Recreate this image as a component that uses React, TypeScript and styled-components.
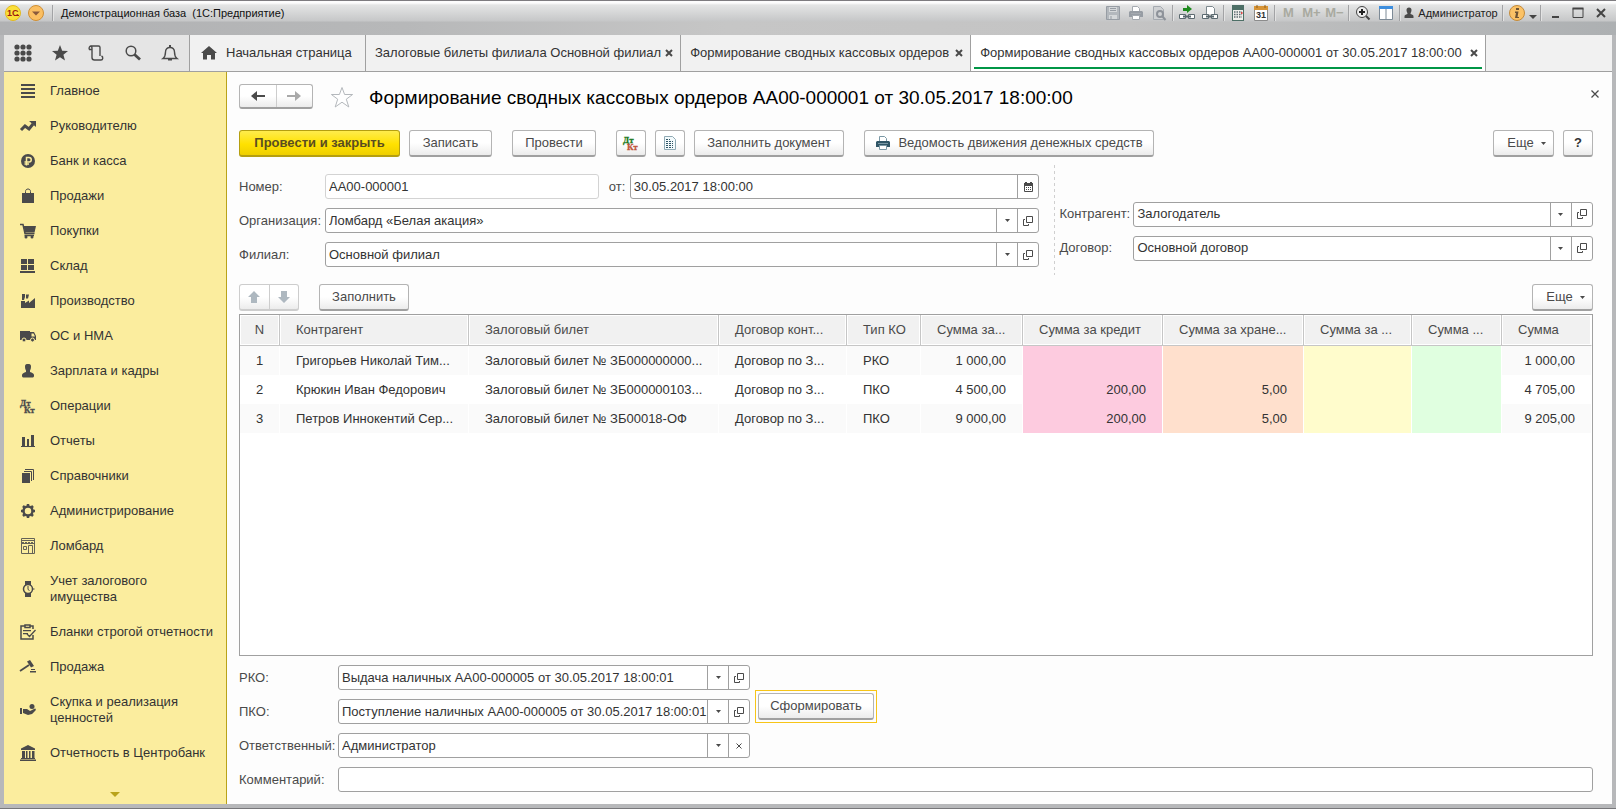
import React from "react";
import styled, { createGlobalStyle, css } from "styled-components";

const GlobalStyle = createGlobalStyle`
  * { box-sizing: border-box; }
  body {
    margin: 0;
    font-family: "Liberation Sans", Arial, sans-serif;
    font-size: 13px;
    line-height: 16px;
    color: #333;
  }
  button, input { font: inherit; color: inherit; }
  svg { overflow: visible; }
`;

/* ---------- window frame ---------- */

const Frame = styled.div`
  display: flex;
  flex-direction: column;
  height: 100vh;
  min-height: 560px;
  padding: 0 4px 4px;
  background: #b7b8ba;
  border-top: 1px solid #7e7c80;
  border-bottom: 1px solid #77777a;
`;

const TitleBar = styled.header`
  display: flex;
  align-items: flex-start;
  height: 34px;
  margin: 0 -4px;
  padding: 0 4px;
  background:
    linear-gradient(#fdfdfd 0, #fdfdfd 2px, #e4e5e5 4px, #c6c7c8 20px, transparent 21px),
    linear-gradient(90deg, #b0b1b3, #b7b8b9 25%, #c6c6c6 45%, #c4c4c4 70%, #adb0b2);
`;

const TitleGroup = styled.div<{ $push?: boolean }>`
  display: flex;
  align-items: center;
  height: 24px;
  margin-left: ${(p) => (p.$push ? "auto" : "0")};
`;

const TitleText = styled.span`
  padding-left: 6px;
  font-size: 11px;
  color: #111;
  white-space: pre;
`;

const Separator = styled.span`
  width: 1px;
  height: 16px;
  margin: 0 2px;
  background: #a2a3a5;
  box-shadow: 1px 0 0 #e3e3e3;
`;

const TitleButton = styled.button<{ $w?: number; $dim?: boolean }>`
  display: flex;
  align-items: center;
  justify-content: center;
  width: ${(p) => (p.$w ? p.$w + "px" : "23px")};
  height: 24px;
  padding: 0;
  border: 0;
  background: none;
  font-size: 13px;
  font-weight: bold;
  color: ${(p) => (p.$dim ? "#a9aaa0" : "#3c3c3c")};
`;

const UserButton = styled(TitleButton)`
  width: 98px;
  gap: 4px;
  font-size: 11px;
  font-weight: normal;
  color: #222;
`;

/* ---------- tab strip ---------- */

const TabStrip = styled.div`
  display: flex;
  flex: none;
  height: 37px;
  background: #f1f1f1;
  border-bottom: 1px solid #a0a0a0;
`;

const Tools = styled.div`
  display: flex;
  flex: none;
  align-items: center;
  width: 185px;
  padding: 0 1px;
  background: #e5e5e5;
`;

const ToolButton = styled.button`
  display: flex;
  flex: 1;
  align-items: center;
  justify-content: center;
  height: 36px;
  padding: 0;
  border: 0;
  background: none;
`;

const Tab = styled.div<{ $active?: boolean; $min?: number }>`
  display: flex;
  align-items: center;
  justify-content: space-between;
  gap: 2px;
  min-width: ${(p) => p.$min ?? 0}px;
  padding: 0 5px 0 9px;
  border-left: 1px solid #a0a0a0;
  white-space: nowrap;
  ${(p) =>
    p.$active &&
    css`
      background: #fff;
      border-right: 1px solid #a0a0a0;
      box-shadow: inset 3px 0 #fff, inset -3px 0 #fff, inset 0 -2px #fff, inset 0 -4px #009646;
    `}
`;

const HomeTab = styled(Tab)`
  justify-content: flex-start;
  gap: 9px;
  padding: 0 0 0 11px;
`;

const TabLink = styled.a`
  color: #333;
  text-decoration: none;
`;

const IconButton = styled.button`
  display: flex;
  align-items: center;
  justify-content: center;
  width: 12px;
  height: 12px;
  padding: 0;
  border: 0;
  background: none;
`;

/* ---------- body ---------- */

const Body = styled.div`
  display: flex;
  flex: 1;
  min-height: 0;
  background: #fdfdfd;
`;

const Sidebar = styled.nav`
  display: flex;
  flex: none;
  flex-direction: column;
  width: 223px;
  background: #fbed9e;
  border-right: 1px solid #b9a31a;
`;

const NavList = styled.div`
  flex: 1;
  min-height: 0;
  padding-top: 1px;
  overflow: hidden;
`;

const NavLink = styled.a`
  display: flex;
  align-items: center;
  gap: 14px;
  min-height: 35px;
  padding: 10px 10px 9px 16px;
  color: #333;
  text-decoration: none;
`;

const NavIcon = styled.span`
  display: flex;
  flex: none;
  width: 16px;
  height: 16px;
`;

const NavText = styled.span`
  max-width: 166px;
`;

const MoreNav = styled.button`
  display: flex;
  justify-content: center;
  height: 12px;
  padding: 0;
  border: 0;
  background: none;
`;

const Main = styled.main`
  display: flex;
  flex: 1;
  flex-direction: column;
  min-width: 0;
  padding: 12px 19px 12px 12px;
`;

const HeadRow = styled.div`
  display: flex;
  align-items: center;
  height: 25px;
`;

const Title = styled.h1`
  flex: 1;
  margin: 0 0 0 15px;
  padding-top: 2px;
  font-size: 19px;
  line-height: 25px;
  font-weight: normal;
  color: #000;
  white-space: nowrap;
`;

const Star = styled.button`
  display: flex;
  margin-left: 17px;
  padding: 0;
  border: 0;
  background: none;
`;

const CloseForm = styled(IconButton)`
  align-self: flex-start;
  margin: 4px -8px 0 0;
`;

const raised = css`
  border: 1px solid #b4b4b4;
  border-bottom: 2px solid #a0a0a0;
  border-radius: 3px;
  background: linear-gradient(#fff 50%, #ececec);
`;

const ButtonPair = styled.div<{ $w: number; $h: number; $pale?: boolean }>`
  display: flex;
  width: ${(p) => p.$w}px;
  height: ${(p) => p.$h}px;
  ${raised}
  ${(p) => p.$pale && css`border-color: #cdcdcd;`}
`;

const PairButton = styled.button`
  display: flex;
  flex: 1;
  align-items: center;
  justify-content: center;
  padding: 0;
  border: 0;
  background: none;
  & + & { border-left: 1px solid #cdcdcd; }
`;

const CommandBar = styled.div`
  display: flex;
  align-items: center;
  margin-top: 21px;
`;

const Button = styled.button<{ $w: number; $gap?: number; $push?: boolean }>`
  display: flex;
  flex: none;
  align-items: center;
  justify-content: center;
  gap: 7px;
  width: ${(p) => p.$w}px;
  height: 27px;
  margin-left: ${(p) => (p.$push ? "auto" : (p.$gap ?? 0) + "px")};
  padding: 0;
  color: #4a4a4a;
  white-space: nowrap;
  ${raised}
`;

const PrimaryButton = styled(Button)`
  font-weight: bold;
  color: #5a4d20;
  border-color: #b59f10;
  background: linear-gradient(#ffec4d, #ffe100 55%, #efcf00);
`;

const MoreButton = styled(Button)`
  padding-left: 6px;
`;

const HelpButton = styled(Button)`
  font-weight: bold;
  color: #333;
`;

const Fields = styled.div`
  display: grid;
  grid-template-columns: minmax(0, 3fr) 20px minmax(0, 2fr);
  margin-top: 8px;
`;

const FieldColumn = styled.div`
  display: flex;
  flex-direction: column;
  gap: 9px;
  padding: 9px 0 8px;
`;

const RightColumn = styled(FieldColumn)`
  justify-content: center;
  padding: 22px 0 0;
`;

const DashedLine = styled.div`
  width: 1px;
  margin-left: 15px;
  background: repeating-linear-gradient(#cfcfcf 0 3px, transparent 3px 6px);
`;

const FieldRow = styled.div`
  display: flex;
  align-items: center;
`;

const Label = styled.label<{ $w: number }>`
  flex: none;
  width: ${(p) => p.$w}px;
  color: #4a4a4a;
  white-space: nowrap;
`;

const OfLabel = styled(Label)`
  padding-left: 10px;
`;

const Box = styled.div<{ $grow?: number; $pale?: boolean }>`
  display: flex;
  flex: ${(p) => p.$grow ?? 1} 1 0;
  min-width: 0;
  height: 25px;
  border: 1px solid ${(p) => (p.$pale ? "#d3d3d3" : "#a0a0a0")};
  border-radius: 3px;
  background: #fff;
`;

const TextInput = styled.input`
  flex: 1;
  min-width: 0;
  padding: 0 0 0 3px;
  border: 0;
  outline: 0;
  background: none;
`;

const BoxButton = styled.button`
  display: flex;
  flex: none;
  align-items: center;
  justify-content: center;
  width: 21px;
  padding: 0;
  border: 0;
  border-left: 1px solid #a0a0a0;
  background: none;
`;

/* ---------- table ---------- */

const TableBar = styled.div`
  display: flex;
  align-items: center;
  margin-top: 9px;
`;

const TableFrame = styled.div`
  flex: 1;
  min-height: 0;
  margin-top: 3px;
  border: 1px solid #a0a0a0;
  background: #fff;
  overflow: hidden;
`;

const Table = styled.table`
  width: 100%;
  table-layout: fixed;
  border-collapse: separate;
  border-spacing: 0;
`;

const Th = styled.th<{ $center?: boolean }>`
  height: 31px;
  padding: 0 0 0 16px;
  ${(p) => p.$center && "padding: 0;"}
  border-right: 1px solid #c6c6c6;
  border-bottom: 1px solid #c6c6c6;
  background: #f1f1f1;
  box-shadow: inset 0 0 0 1px #fff;
  font-weight: normal;
  text-align: ${(p) => (p.$center ? "center" : "left")};
  color: #4a4a4a;
  white-space: nowrap;
  overflow: hidden;
  &:last-child { border-right-color: #fff; }
`;

type Align = "left" | "right" | "center";

const Td = styled.td<{ $align: Align; $tint?: string }>`
  height: 29px;
  padding: ${(p) => (p.$align === "center" ? "0" : p.$align === "left" ? "0 0 0 16px" : "0 16px 0 0")};
  border-right: 1px solid #fff;
  text-align: ${(p) => p.$align};
  white-space: nowrap;
  overflow: hidden;
  background: ${(p) => p.$tint ?? "transparent"};
`;

const Tr = styled.tr`
  &:nth-child(odd) { background: #fafafa; }
`;

/* ---------- bottom fields ---------- */

const Bottom = styled.div`
  display: flex;
  flex-direction: column;
  gap: 9px;
  margin-top: 9px;
`;

const BottomTop = styled.div`
  display: flex;
  gap: 5px;
`;

const BottomFields = styled.div`
  display: flex;
  flex-direction: column;
  gap: 9px;
  width: 511px;
`;

const FocusRing = styled.div`
  align-self: flex-start;
  margin-top: 25px;
  padding: 2px;
  border: 1px solid #f7c518;
`;

/* ---------- icons ---------- */

const DARK = "#4a4a4a";

function Svg({ s = 16, children, w, h }: { s?: number; w?: number; h?: number; children: React.ReactNode }) {
  const W = w ?? s;
  const H = h ?? s;
  return (
    <svg width={W} height={H} viewBox={`0 0 ${W} ${H}`} fill="none" aria-hidden="true">
      {children}
    </svg>
  );
}

const Cross = ({ bold }: { bold?: boolean }) => (
  <Svg s={bold ? 8 : 10}>
    {bold ? (
      <path d="M1 1l6 6M7 1l-6 6" stroke={DARK} strokeWidth="2" />
    ) : (
      <path d="M1.500 1.500l7 7M8.500 1.500l-7 7" stroke={DARK} strokeWidth="1.250" />
    )}
  </Svg>
);

const Caret = ({ color = DARK }: { color?: string }) => (
  <Svg w={5} h={3}>
    <path d="M0 0h5L2.500 3z" fill={color} />
  </Svg>
);

const OpenIcon = () => (
  <Svg s={10}>
    <path d="M3.500 .5h6v6h-6zM2 3.500H.5v6h5V8" stroke={DARK} />
  </Svg>
);

const CalendarIcon = () => (
  <Svg w={9} h={10}>
    <path d="M.5 1.500h8v8h-8z" stroke={DARK} />
    <path d="M0 1h9v3H0zM1 0h2v2H1zM6 0h2v2H6z" fill={DARK} />
    <path d="M2 5.500h5M2 7.500h5" stroke={DARK} strokeDasharray="1 1" />
  </Svg>
);

const PrinterIcon = ({ c = "#2f5566", light = "#7a98a5" }: { c?: string; light?: string }) => (
  <Svg>
    <path d="M4.500 6V1.500h5l2 2V6" stroke={light} fill="#fff" />
    <path d="M2 6h12l1 1v5H1V7z" fill={c} />
    <path d="M4.500 10.500h7v4h-7z" fill="#fff" stroke={light} />
    <path d="M3 8.500h10" stroke={light} />
  </Svg>
);

const DtKt = ({ a = DARK, b = DARK }: { a?: string; b?: string }) => (
  <Svg>
    <text x="0" y="8" fontFamily="Liberation Serif" fontWeight="bold" fontSize="9" fill={a} stroke={a} strokeWidth=".3">Дт</text>
    <text x="4" y="15" fontFamily="Liberation Serif" fontWeight="bold" fontSize="9" fill={b} stroke={b} strokeWidth=".3">Кт</text>
  </Svg>
);

const icons: Record<string, React.ReactNode> = {
  main: <path d="M1 2h14M1 6h14M1 10h14M1 14h14" stroke={DARK} strokeWidth="2" />,
  trend: (
    <>
      <path d="M1 12l4-4 4 3 4-5" stroke={DARK} strokeWidth="3" />
      <path d="M9 3h7v6z" fill={DARK} />
    </>
  ),
  ruble: (
    <>
      <circle cx="8" cy="8" r="7" fill={DARK} />
      <path d="M6.500 12.500v-8h2.500a2 2 0 010 4.500H4.500M4.500 11H9" stroke="#fbed9e" strokeWidth="1.500" />
    </>
  ),
  bag: (
    <>
      <path d="M2 5h3v2h1V5h4v2h1V5h3v10H2z" fill={DARK} />
      <path d="M5.500 7V3.500c0-1.500 1-2.500 2.500-2.500s2.500 1 2.500 2.500V7" stroke={DARK} />
    </>
  ),
  cart: (
    <>
      <path d="M0 1.500h3l2 9h9.500M4.500 12.500H14" stroke={DARK} strokeWidth="1.500" />
      <path d="M3.500 3H16l-1.500 6.500H5z" fill={DARK} />
      <circle cx="6" cy="14" r="1.500" fill={DARK} />
      <circle cx="12" cy="14" r="1.500" fill={DARK} />
    </>
  ),
  store: <path d="M1 1h6v5H1zM8 1h6v5H8zM1 7h6v5H1zM8 7h6v5H8zM0 13h15v2H0z" fill={DARK} />,
  factory: <path d="M1 15V8h4v2l4-2.500V10l6-5v10zM2 1h3v3l-1 3H2zM6 1.500h3L8 5.500H6z" fill={DARK} />,
  truck: (
    <>
      <path d="M0 3h10v9H0zM10 4h4l2 4v4h-6z" fill={DARK} />
      <path d="M11.500 5.500h2l1.500 3h-3.500z" fill="#fbed9e" />
      <circle cx="4" cy="12" r="2" fill={DARK} stroke="#fbed9e" />
      <circle cx="12.500" cy="12" r="2" fill={DARK} stroke="#fbed9e" />
    </>
  ),
  person: (
    <path d="M5 3.500C5 1.500 6 1 8 1s3 .5 3 2.500-.5 3-1 4v1.500c2 .5 4 1.500 4 3V13c0 1-1 1.500-2 1.500H4c-1 0-2-.5-2-1.500v-1c0-1.500 2-2.500 4-3V7.500c-.5-1-1-2-1-4z" fill={DARK} />
  ),
  bars: <path d="M2 4h3v9H2zM7 6h2v7H7zM11 2h3v11h-3zM1 13h14v1H1z" fill={DARK} />,
  books: (
    <>
      <path d="M2 5h8v10H2z" fill={DARK} />
      <path d="M4 3.500h7.500V13M5 1.500h8.500V12" stroke={DARK} />
    </>
  ),
  gear: (
    <>
      <circle cx="8" cy="8" r="4.500" stroke={DARK} strokeWidth="2.500" />
      <path d="M8 1v2M8 13v2M1 8h2M13 8h2M3 3l1.500 1.500M11.500 11.500L13 13M13 3l-1.500 1.500M4.500 11.500L3 13" stroke={DARK} strokeWidth="2.500" />
    </>
  ),
  shop: (
    <g opacity=".85">
      <path d="M1.500 5V.5h13V5M1.500 5v10.500h13V5" stroke={DARK} />
      <path d="M1 2.500h14M1 5.500h14M8.500 15V7.500h4V15M3.500 8.500h3v3h-3z" stroke={DARK} />
      <path d="M2 4.500h12" stroke={DARK} strokeDasharray="2 1" />
    </g>
  ),
  watch: (
    <>
      <path d="M5 0h6v4H5zM5 12h6v4H5z" fill={DARK} />
      <circle cx="8" cy="8" r="4.500" stroke={DARK} strokeWidth="1.500" fill="#fbed9e" />
      <path d="M8 5v3.500l1.500 1M13 8h1.500" stroke={DARK} />
    </>
  ),
  clipboard: (
    <>
      <path d="M5 2H1v13h12v-4M10 2h3v3M5 1h5v2.500H5z" stroke={DARK} strokeWidth="1.500" />
      <path d="M3 6.500h8M3 9.500h5M7 10l2.500 2.500L15.500 6" stroke={DARK} strokeWidth="1.250" />
    </>
  ),
  gavel: (
    <>
      <path d="M0 12l9-6" stroke={DARK} strokeWidth="1.750" />
      <path d="M7 2.500L10 1l4 6-3 1.500z" fill={DARK} />
      <path d="M11 10h4v1h-4zM10 12h6v1.500h-6z" fill={DARK} />
    </>
  ),
  hand: (
    <>
      <path d="M0 6h2v6H0zM3 7h4l3 2 5-2.500c1 0 1 1 .5 2L12 12l-4 1-5-2z" fill={DARK} />
      <circle cx="12" cy="4.500" r="2.500" fill={DARK} />
    </>
  ),
  bank: <path d="M8 0l7 3.500V5H1V3.500zM2 6h3v7H2zM6 6h1.500v7H6zM9 6h1.500v7H9zM12 6h2.500v7H12zM1 13h14v1H1zM0 14.500h16V16H0z" fill={DARK} />,
};

const navItems: [string, string][] = [
  ["main", "Главное"],
  ["trend", "Руководителю"],
  ["ruble", "Банк и касса"],
  ["bag", "Продажи"],
  ["cart", "Покупки"],
  ["store", "Склад"],
  ["factory", "Производство"],
  ["truck", "ОС и НМА"],
  ["person", "Зарплата и кадры"],
  ["dtkt", "Операции"],
  ["bars", "Отчеты"],
  ["books", "Справочники"],
  ["gear", "Администрирование"],
  ["shop", "Ломбард"],
  ["watch", "Учет залогового имущества"],
  ["clipboard", "Бланки строгой отчетности"],
  ["gavel", "Продажа"],
  ["hand", "Скупка и реализация ценностей"],
  ["bank", "Отчетность в Центробанк"],
];

/* ---------- table data ---------- */

const columns: { title: string; width: number; align: Align; tint?: string }[] = [
  { title: "N", width: 40, align: "center" },
  { title: "Контрагент", width: 189, align: "left" },
  { title: "Залоговый билет", width: 250, align: "left" },
  { title: "Договор конт...", width: 128, align: "left" },
  { title: "Тип КО", width: 74, align: "left" },
  { title: "Сумма за...", width: 102, align: "right" },
  { title: "Сумма за кредит", width: 140, align: "right", tint: "#fdcbdf" },
  { title: "Сумма за хране...", width: 141, align: "right", tint: "#ffe0cd" },
  { title: "Сумма за ...", width: 108, align: "right", tint: "#fffccc" },
  { title: "Сумма ...", width: 90, align: "right", tint: "#e0ffe0" },
  { title: "Сумма", width: 90, align: "right" },
];

const rows = [
  ["1", "Григорьев Николай Тим...", "Залоговый билет № ЗБ000000000...", "Договор по З...", "РКО", "1 000,00", "", "", "", "", "1 000,00"],
  ["2", "Крюкин Иван Федорович", "Залоговый билет № ЗБ000000103...", "Договор по З...", "ПКО", "4 500,00", "200,00", "5,00", "", "", "4 705,00"],
  ["3", "Петров Иннокентий Сер...", "Залоговый билет № ЗБ00018-ОФ", "Договор по З...", "ПКО", "9 000,00", "200,00", "5,00", "", "", "9 205,00"],
];

/* ---------- composite parts ---------- */

type Tail = "open" | "clear" | "date";

function Field({ id, label, w, value, tail }: { id: string; label: string; w: number; value: string; tail?: Tail }) {
  return (
    <FieldRow>
      <Label htmlFor={id} $w={w}>{label}</Label>
      <FieldBox id={id} value={value} tail={tail} />
    </FieldRow>
  );
}

function FieldBox({ id, value, tail, grow, pale }: { id: string; value: string; tail?: Tail; grow?: number; pale?: boolean }) {
  return (
    <Box $grow={grow} $pale={pale}>
      <TextInput id={id} defaultValue={value} readOnly={pale} />
      {tail && tail !== "date" && (
        <BoxButton aria-label="Выбрать"><Caret /></BoxButton>
      )}
      {tail === "open" && <BoxButton aria-label="Открыть"><OpenIcon /></BoxButton>}
      {tail === "clear" && (
        <BoxButton aria-label="Очистить">
          <Svg s={6}><path d="M.5 .5l5 5M5.500 .5l-5 5" stroke={DARK} /></Svg>
        </BoxButton>
      )}
      {tail === "date" && <BoxButton aria-label="Календарь"><CalendarIcon /></BoxButton>}
    </Box>
  );
}

function WindowTitle() {
  return (
    <TitleBar>
      <TitleGroup>
        <TitleButton $w={18} aria-label="1С">
          <Svg>
            <circle cx="8" cy="8" r="7.500" fill="#fbe03a" stroke="#e3b91e" />
            <text x="2" y="11" fontSize="9" fontWeight="bold" fontFamily="Liberation Sans" fill="#a02010">1С</text>
            <path d="M9 10.500h5" stroke="#a02010" />
          </Svg>
        </TitleButton>
        <TitleButton $w={28} aria-label="Главное меню">
          <Svg>
            <circle cx="8" cy="8" r="7.500" fill="#fbbf62" stroke="#cf8f35" />
            <path d="M4 6.500h8L8 10.500z" fill="#8a5a3c" />
          </Svg>
        </TitleButton>
        <Separator />
        <TitleText>{"Демонстрационная база  (1С:Предприятие)"}</TitleText>
      </TitleGroup>
      <TitleGroup $push>
        <TitleButton aria-label="Сохранить">
          <Svg>
            <path d="M1.500 1.500h13v13h-13z" fill="#b3b8bd" stroke="#979da4" />
            <path d="M4 2h8v5H4zM4 10h8v4H4z" fill="#d5d8da" />
            <path d="M5 3.500h6M5 5.500h6M6 11v3" stroke="#979da4" />
          </Svg>
        </TitleButton>
        <TitleButton aria-label="Печать"><PrinterIcon c="#979da4" light="#a5aab0" /></TitleButton>
        <TitleButton aria-label="Просмотр">
          <Svg>
            <path d="M2.500 14.500v-13h7l3 3v10z" fill="#d0d2d4" stroke="#a5aab0" />
            <circle cx="9" cy="9" r="3" stroke="#8d9299" strokeWidth="2" />
            <path d="M11 11l3.500 4" stroke="#8d9299" strokeWidth="2" />
          </Svg>
        </TitleButton>
        <Separator />
        <TitleButton aria-label="Добавить ссылку">
          <Svg>
            <path d="M4 3h4V0l5 4-5 4V6H4z" fill="#1d8a1d" />
            <path d="M.5 9.500h6v4h-6zM9.500 9.500h6v4h-6z" fill="#fff" stroke="#5c6a70" />
            <path d="M4 11.500h8" stroke="#5c6a70" strokeWidth="2" />
          </Svg>
        </TitleButton>
        <TitleButton aria-label="Перейти по ссылке">
          <Svg>
            <path d="M4.500 9V1.500h6l2 2V9" fill="#fff" stroke="#7c888e" />
            <path d="M.5 9.500h6v4h-6zM9.500 9.500h6v4h-6z" fill="#fff" stroke="#5c6a70" />
            <path d="M4 11.500h8" stroke="#5c6a70" strokeWidth="2" />
          </Svg>
        </TitleButton>
        <Separator />
        <TitleButton aria-label="Калькулятор">
          <Svg>
            <path d="M2 0h12v16H2z" fill="#4d6f66" />
            <path d="M3 5h10v10H3z" fill="#f0f0ec" />
            <path d="M4 7h8M4 9.500h8M4 12h8" stroke="#5c6a70" strokeWidth="1.500" strokeDasharray="1.500 1" />
            <path d="M11 7h1.500v2H11z" fill="#d44" />
          </Svg>
        </TitleButton>
        <TitleButton aria-label="Календарь">
          <Svg>
            <path d="M1.500 1.500h13v14h-13z" fill="#fff" stroke="#8c8c8c" />
            <path d="M1 1h14v4H1z" fill="#d79436" />
            <path d="M4 0v3M12 0v3" stroke="#8f5d17" />
            <text x="3" y="13" fontSize="9" fontFamily="Liberation Sans" fill="#333">31</text>
          </Svg>
        </TitleButton>
        <Separator />
        <TitleButton $dim>M</TitleButton>
        <TitleButton $dim>M+</TitleButton>
        <TitleButton $dim>M−</TitleButton>
        <Separator />
        <TitleButton aria-label="Масштаб">
          <Svg>
            <circle cx="7" cy="7" r="5.500" fill="#eee" stroke="#444" />
            <path d="M4 7h6M7 4v6" stroke="#222" strokeWidth="2" />
            <path d="M11 11l3.500 3.500" stroke="#444" strokeWidth="2" />
          </Svg>
        </TitleButton>
        <TitleButton aria-label="Панели">
          <Svg>
            <path d="M1.500 1.500h13v13h-13z" fill="#fff" stroke="#7d8a96" />
            <path d="M1 1h14v3H1z" fill="#3d8ede" />
            <path d="M8 4v10" stroke="#7d8a96" />
          </Svg>
        </TitleButton>
        <Separator />
        <UserButton>
          <Svg w={10} h={12}>
            <path d="M2.500 3a2.500 2.500 0 015 0c0 2-1 2.500-1 4 2 .5 3 1 3 2.500v1.500h-9V9.500C.5 8 1.500 7.500 3.500 7c0-1.500-1-2-1-4z" fill="#4a4a4a" />
          </Svg>
          Администратор
        </UserButton>
        <Separator />
        <TitleButton aria-label="О программе">
          <Svg>
            <circle cx="8" cy="8" r="7.500" fill="#fbc266" stroke="#c48b3a" />
            <path d="M7 3h3v2H7zM6 6.500h3.500L8.500 12H10v1H6l1-5H6z" fill="#6d5334" />
          </Svg>
        </TitleButton>
        <TitleButton $w={10} aria-label="Меню">
          <Svg w={8} h={12}><path d="M0 8h8l-4 4z" fill="#444" /></Svg>
        </TitleButton>
        <Separator />
        <TitleButton aria-label="Свернуть"><Svg s={12}><path d="M3 10h7" stroke="#444" strokeWidth="2" /></Svg></TitleButton>
        <TitleButton aria-label="Развернуть"><Svg s={12}><path d="M1 1.500h10v9H1z" stroke="#444" strokeWidth="1" /><path d="M.5 1.500h11" stroke="#444" strokeWidth="2" /></Svg></TitleButton>
        <TitleButton aria-label="Закрыть"><Svg s={10}><path d="M1 1l8 8M9 1l-8 8" stroke="#444" strokeWidth="2" /></Svg></TitleButton>
      </TitleGroup>
    </TitleBar>
  );
}

function Tabs() {
  return (
    <TabStrip>
      <Tools>
        <ToolButton aria-label="Меню функций">
          <Svg s={18}>
            {[3, 9, 15].map((y) => [3, 9, 15].map((x) => <circle key={`${x}-${y}`} cx={x} cy={y} r="2.600" fill={DARK} />))}
          </Svg>
        </ToolButton>
        <ToolButton aria-label="Избранное">
          <Svg><path d="M8 0l2.200 5.700 5.800.3-4.600 3.700L13 15.500 8 12.200 3 15.500l1.600-5.800L0 6l5.800-.3z" fill={DARK} /></Svg>
        </ToolButton>
        <ToolButton aria-label="История">
          <Svg><path d="M4 4.500H1.500c-1-1.500 0-3.500 1.500-3.500h7.500c1 0 1.500.5 1.500 1.500V11M2.500 1C4 1 4 2.500 4 3.500v9c0 1.500 1 2.500 2.500 2.500H13c2 0 2.500-3 .5-4" stroke={DARK} strokeWidth="1.400" /></Svg>
        </ToolButton>
        <ToolButton aria-label="Поиск">
          <Svg><circle cx="6" cy="6" r="4.800" stroke={DARK} strokeWidth="1.500" /><path d="M9.500 9.500l5.500 5" stroke={DARK} strokeWidth="2.800" /></Svg>
        </ToolButton>
        <ToolButton aria-label="Оповещения">
          <Svg>
            <path d="M1 13.500c2-1.500 2.500-3 2.500-6.500C3.500 4 5.500 2.500 8 2.500S12.500 4 12.500 7c0 3.500.5 5 2.500 6.500z" stroke={DARK} strokeWidth="1.400" />
            <path d="M8 0v2.500M6 14.500h4" stroke={DARK} strokeWidth="2" />
          </Svg>
        </ToolButton>
      </Tools>
      <HomeTab $min={176}>
        <Svg><path d="M8 1l8 7h-2v6.500h-4V10H6v4.500H2V8H0z" fill={DARK} /></Svg>
        <TabLink href="#home">Начальная страница</TabLink>
      </HomeTab>
      <Tab $min={310}>
        <TabLink href="#tickets">Залоговые билеты филиала Основной филиал</TabLink>
        <IconButton aria-label="Закрыть вкладку"><Cross bold /></IconButton>
      </Tab>
      <Tab $min={290}>
        <TabLink href="#orders">Формирование сводных кассовых ордеров</TabLink>
        <IconButton aria-label="Закрыть вкладку"><Cross bold /></IconButton>
      </Tab>
      <Tab $active $min={516}>
        <TabLink href="#order">Формирование сводных кассовых ордеров АА00-000001 от 30.05.2017 18:00:00</TabLink>
        <IconButton aria-label="Закрыть вкладку"><Cross bold /></IconButton>
      </Tab>
    </TabStrip>
  );
}

export default function App() {
  return (
    <>
      <GlobalStyle />
      <Frame>
        <WindowTitle />
        <Tabs />
        <Body>
          <Sidebar>
            <NavList>
              {navItems.map(([icon, text]) => (
                <NavLink key={text} href={`#${icon}`}>
                  <NavIcon>{icon === "dtkt" ? <DtKt /> : <Svg>{icons[icon]}</Svg>}</NavIcon>
                  <NavText>{text}</NavText>
                </NavLink>
              ))}
            </NavList>
            <MoreNav aria-label="Еще разделы">
              <Svg w={10} h={5}><path d="M0 0h10L5 5z" fill="#b9a31a" /></Svg>
            </MoreNav>
          </Sidebar>
          <Main>
            <HeadRow>
              <ButtonPair $w={74} $h={25}>
                <PairButton aria-label="Назад">
                  <Svg w={14} h={10}><path d="M0 5l6-5v10z" fill={DARK} /><path d="M4 5h10" stroke={DARK} strokeWidth="2" /></Svg>
                </PairButton>
                <PairButton aria-label="Вперед">
                  <Svg w={14} h={10}><path d="M14 5L8 0v10z" fill="#a9a9a9" /><path d="M10 5H0" stroke="#a9a9a9" strokeWidth="2" /></Svg>
                </PairButton>
              </ButtonPair>
              <Star aria-label="В избранное">
                <Svg w={24} h={22}>
                  <path d="M12 1.500l2.600 7h8l-6.300 4.700 2.500 7.800-6.800-4.800L5.200 21l2.500-7.800L1.400 8.500h8z" stroke="#b4b8bc" fill="#fff" />
                </Svg>
              </Star>
              <Title>Формирование сводных кассовых ордеров АА00-000001 от 30.05.2017 18:00:00</Title>
              <CloseForm aria-label="Закрыть"><Cross /></CloseForm>
            </HeadRow>

            <CommandBar>
              <PrimaryButton $w={161}>Провести и закрыть</PrimaryButton>
              <Button $w={83} $gap={9}>Записать</Button>
              <Button $w={84} $gap={20}>Провести</Button>
              <Button $w={30} $gap={20} aria-label="Проводки"><DtKt a="#1c7a1c" b="#c0553a" /></Button>
              <Button $w={30} $gap={9} aria-label="Отчет">
                <Svg>
                  <path d="M2.500 1.500h8l3 3v10h-11z" fill="#f3fafc" stroke="#8fa9b4" />
                  <path d="M4 4.500h4M4 6.500h7M4 8.500h7M4 10.500h7M4 12.500h7" stroke="#2f5566" strokeDasharray="2 1" />
                </Svg>
              </Button>
              <Button $w={150} $gap={9}>Заполнить документ</Button>
              <Button $w={290} $gap={20}><PrinterIcon />Ведомость движения денежных средств</Button>
              <MoreButton $w={61} $push>Еще<Caret /></MoreButton>
              <HelpButton $w={30} $gap={9}>?</HelpButton>
            </CommandBar>

            <Fields>
              <FieldColumn>
                <FieldRow>
                  <Label htmlFor="number" $w={86}>Номер:</Label>
                  <FieldBox id="number" value="АА00-000001" grow={2} pale />
                  <OfLabel htmlFor="date" $w={31}>от:</OfLabel>
                  <FieldBox id="date" value="30.05.2017 18:00:00" grow={3} tail="date" />
                </FieldRow>
                <Field id="org" label="Организация:" w={86} value="Ломбард «Белая акация»" tail="open" />
                <Field id="branch" label="Филиал:" w={86} value="Основной филиал" tail="open" />
              </FieldColumn>
              <DashedLine />
              <RightColumn>
                <Field id="party" label="Контрагент:" w={74} value="Залогодатель" tail="open" />
                <Field id="contract" label="Договор:" w={74} value="Основной договор" tail="open" />
              </RightColumn>
            </Fields>

            <TableBar>
              <ButtonPair $w={60} $h={27} $pale>
                <PairButton aria-label="Вверх">
                  <Svg s={12}><path d="M6 0l6 6H9v6H3V6H0z" fill="#aeb8c0" /></Svg>
                </PairButton>
                <PairButton aria-label="Вниз">
                  <Svg s={12}><path d="M6 12l6-6H9V0H3v6H0z" fill="#aeb8c0" /></Svg>
                </PairButton>
              </ButtonPair>
              <Button $w={90} $gap={20}>Заполнить</Button>
              <MoreButton $w={61} $push>Еще<Caret /></MoreButton>
            </TableBar>

            <TableFrame>
              <Table>
                <colgroup>
                  {columns.map((c, i) => <col key={i} width={c.width} />)}
                </colgroup>
                <thead>
                  <tr>
                    {columns.map((c, i) => <Th key={i} $center={c.align === "center"}>{c.title}</Th>)}
                  </tr>
                </thead>
                <tbody>
                  {rows.map((r) => (
                    <Tr key={r[0]}>
                      {r.map((v, i) => <Td key={i} $align={columns[i].align} $tint={columns[i].tint}>{v}</Td>)}
                    </Tr>
                  ))}
                </tbody>
              </Table>
            </TableFrame>

            <Bottom>
              <BottomTop>
                <BottomFields>
                  <Field id="rko" label="РКО:" w={99} value="Выдача наличных АА00-000005 от 30.05.2017 18:00:01" tail="open" />
                  <Field id="pko" label="ПКО:" w={99} value="Поступление наличных АА00-000005 от 30.05.2017 18:00:01" tail="open" />
                  <Field id="person" label="Ответственный:" w={99} value="Администратор" tail="clear" />
                </BottomFields>
                <FocusRing><Button $w={116}>Сформировать</Button></FocusRing>
              </BottomTop>
              <Field id="comment" label="Комментарий:" w={99} value="" />
            </Bottom>
          </Main>
        </Body>
      </Frame>
    </>
  );
}
